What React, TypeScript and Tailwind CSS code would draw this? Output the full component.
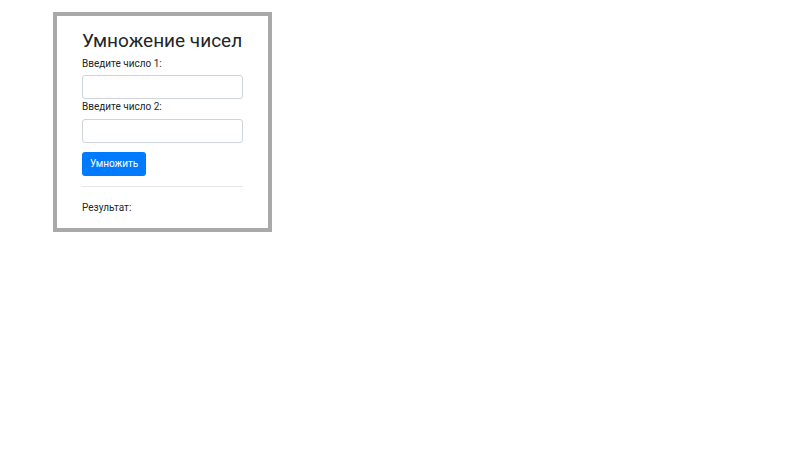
export default function App() {
  return (
    <div className="w-[800px] h-[450px] bg-white text-[#212529]" style={{ fontFamily: 'Roboto, "Noto Sans", sans-serif' }}>
      <div className="pt-[12px] pl-[53px]">
        <div className="w-[219px] h-[220px] border-4 border-[#a9a9a9] px-[25px] pt-[13px] flex flex-col">
          <h3 className="text-[19px] leading-[24px] font-normal whitespace-nowrap">Умножение чисел</h3>
          <label className="mt-[3px] text-[10px] leading-[16px]">Введите число 1:</label>
          <input className="mt-[3px] w-[161px] h-[24px] border border-[#ced4da] rounded-[3px] outline-none" />
          <label className="text-[10px] leading-[16px]">Введите число 2:</label>
          <input className="mt-[4px] w-[161px] h-[24px] border border-[#ced4da] rounded-[3px] outline-none" />
          <div className="mt-[9px] flex">
            <button className="h-[24px] px-[8px] bg-[#007bff] text-white text-[10px] leading-[16px] rounded-[3px]">Умножить</button>
          </div>
          <hr className="mt-[10px] w-[161px] border-0 border-t border-[#e5e5e5]" />
          <div className="mt-[13px] text-[10px] leading-[16px]">Результат:</div>
        </div>
      </div>
    </div>
  );
}
